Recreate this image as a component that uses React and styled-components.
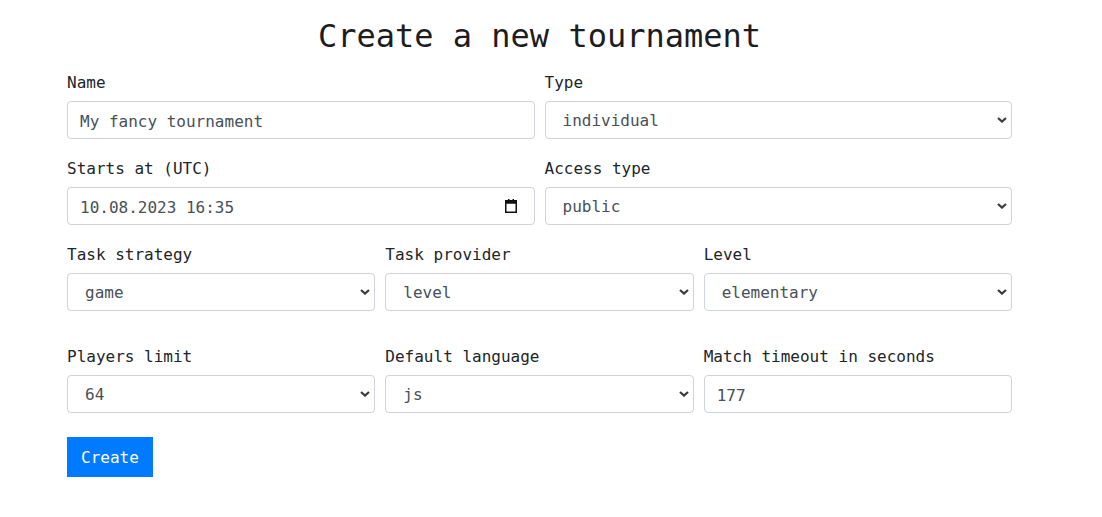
import React from "react";
import styled, { createGlobalStyle } from "styled-components";

const GlobalStyle = createGlobalStyle`
  body {
    margin: 0;
    background: #fff;
    color: #212529;
    font-family: "DejaVu Sans Mono", "Liberation Mono", monospace;
    font-size: 16px;
    line-height: 1.5;
  }
`;

const Page = styled.div`
  width: 945px;
  padding: 0 0 0 67px;
`;

const Title = styled.h1`
  margin: 17px 0 14px;
  font-size: 32px;
  line-height: 38px;
  font-weight: 400;
  text-align: center;
  color: #1d1d1f;
`;

const Row = styled.div`
  display: grid;
  grid-template-columns: repeat(${(p) => p.$cols}, 1fr);
  column-gap: 10px;
  margin-bottom: ${(p) => p.$gap || 0}px;
`;

const Group = styled.div`
  margin-bottom: 16px;
`;

const Label = styled.label`
  display: block;
  padding-top: 2px;
  margin-bottom: 6px;
  line-height: 24px;
  color: #212529;
`;

const FieldWrap = styled.div`
  position: relative;
`;

const Input = styled.input`
  box-sizing: border-box;
  display: block;
  width: 100%;
  height: 38px;
  padding: 7px 12px 5px;
  border: 1px solid #ced4da;
  border-radius: 4px;
  font: inherit;
  color: #495057;
  background: #fff;
  outline: none;
`;

const Select = styled.select`
  box-sizing: border-box;
  display: block;
  width: 100%;
  height: 38px;
  padding: 7px 28px 5px 17px;
  border: 1px solid #ced4da;
  border-radius: 4px;
  font: inherit;
  color: #495057;
  background: #fff;
  appearance: none;
  -webkit-appearance: none;
  outline: none;
`;

const Overlay = styled.span`
  position: absolute;
  right: ${(p) => p.$right}px;
  top: 50%;
  transform: translateY(-50%);
  display: flex;
  pointer-events: none;
`;

const Button = styled.button`
  height: 40px;
  padding: 2px 14px 0;
  border: none;
  border-radius: 0;
  background: #007bff;
  color: #fff;
  font: inherit;
  cursor: pointer;
`;

const Chevron = () => (
  <svg width="10" height="6" viewBox="0 0 10 6">
    <path d="M1 1 L5 4.6 L9 1" fill="none" stroke="#3c3c3c" strokeWidth="2.2" />
  </svg>
);

const CalendarIcon = () => (
  <svg width="12" height="14" viewBox="0 0 12 14">
    <rect x="3" y="0" width="1.5" height="2" fill="#111" />
    <rect x="7.5" y="0" width="1.5" height="2" fill="#111" />
    <rect x="0.75" y="1.75" width="10.5" height="11.5" fill="none" stroke="#111" strokeWidth="1.5" />
    <rect x="0.75" y="1.75" width="10.5" height="3" fill="#111" />
  </svg>
);

const SelectField = ({ label, value, options }) => (
  <Group>
    <Label>{label}</Label>
    <FieldWrap>
      <Select defaultValue={value}>
        {options.map((o) => (
          <option key={o}>{o}</option>
        ))}
      </Select>
      <Overlay $right={5}>
        <Chevron />
      </Overlay>
    </FieldWrap>
  </Group>
);

const App = () => (
  <Page>
    <GlobalStyle />
    <Title>Create a new tournament</Title>
    <form onSubmit={(e) => e.preventDefault()}>
      <Row $cols={2}>
        <Group>
          <Label>Name</Label>
          <Input defaultValue="My fancy tournament" />
        </Group>
        <SelectField label="Type" value="individual" options={["individual", "team", "stairway"]} />
      </Row>
      <Row $cols={2}>
        <Group>
          <Label>Starts at (UTC)</Label>
          <FieldWrap>
            <Input defaultValue="10.08.2023 16:35" />
            <Overlay $right={18}>
              <CalendarIcon />
            </Overlay>
          </FieldWrap>
        </Group>
        <SelectField label="Access type" value="public" options={["public", "token"]} />
      </Row>
      <Row $cols={3} $gap={16}>
        <SelectField label="Task strategy" value="game" options={["game", "random"]} />
        <SelectField label="Task provider" value="level" options={["level", "tags", "task_pack"]} />
        <SelectField label="Level" value="elementary" options={["elementary", "easy", "medium", "hard"]} />
      </Row>
      <Row $cols={3} $gap={8}>
        <SelectField label="Players limit" value="64" options={["2", "4", "8", "16", "32", "64", "128"]} />
        <SelectField label="Default language" value="js" options={["js", "ruby", "python"]} />
        <Group>
          <Label>Match timeout in seconds</Label>
          <Input defaultValue="177" />
        </Group>
      </Row>
      <Button type="submit">Create</Button>
    </form>
  </Page>
);

export default App;
